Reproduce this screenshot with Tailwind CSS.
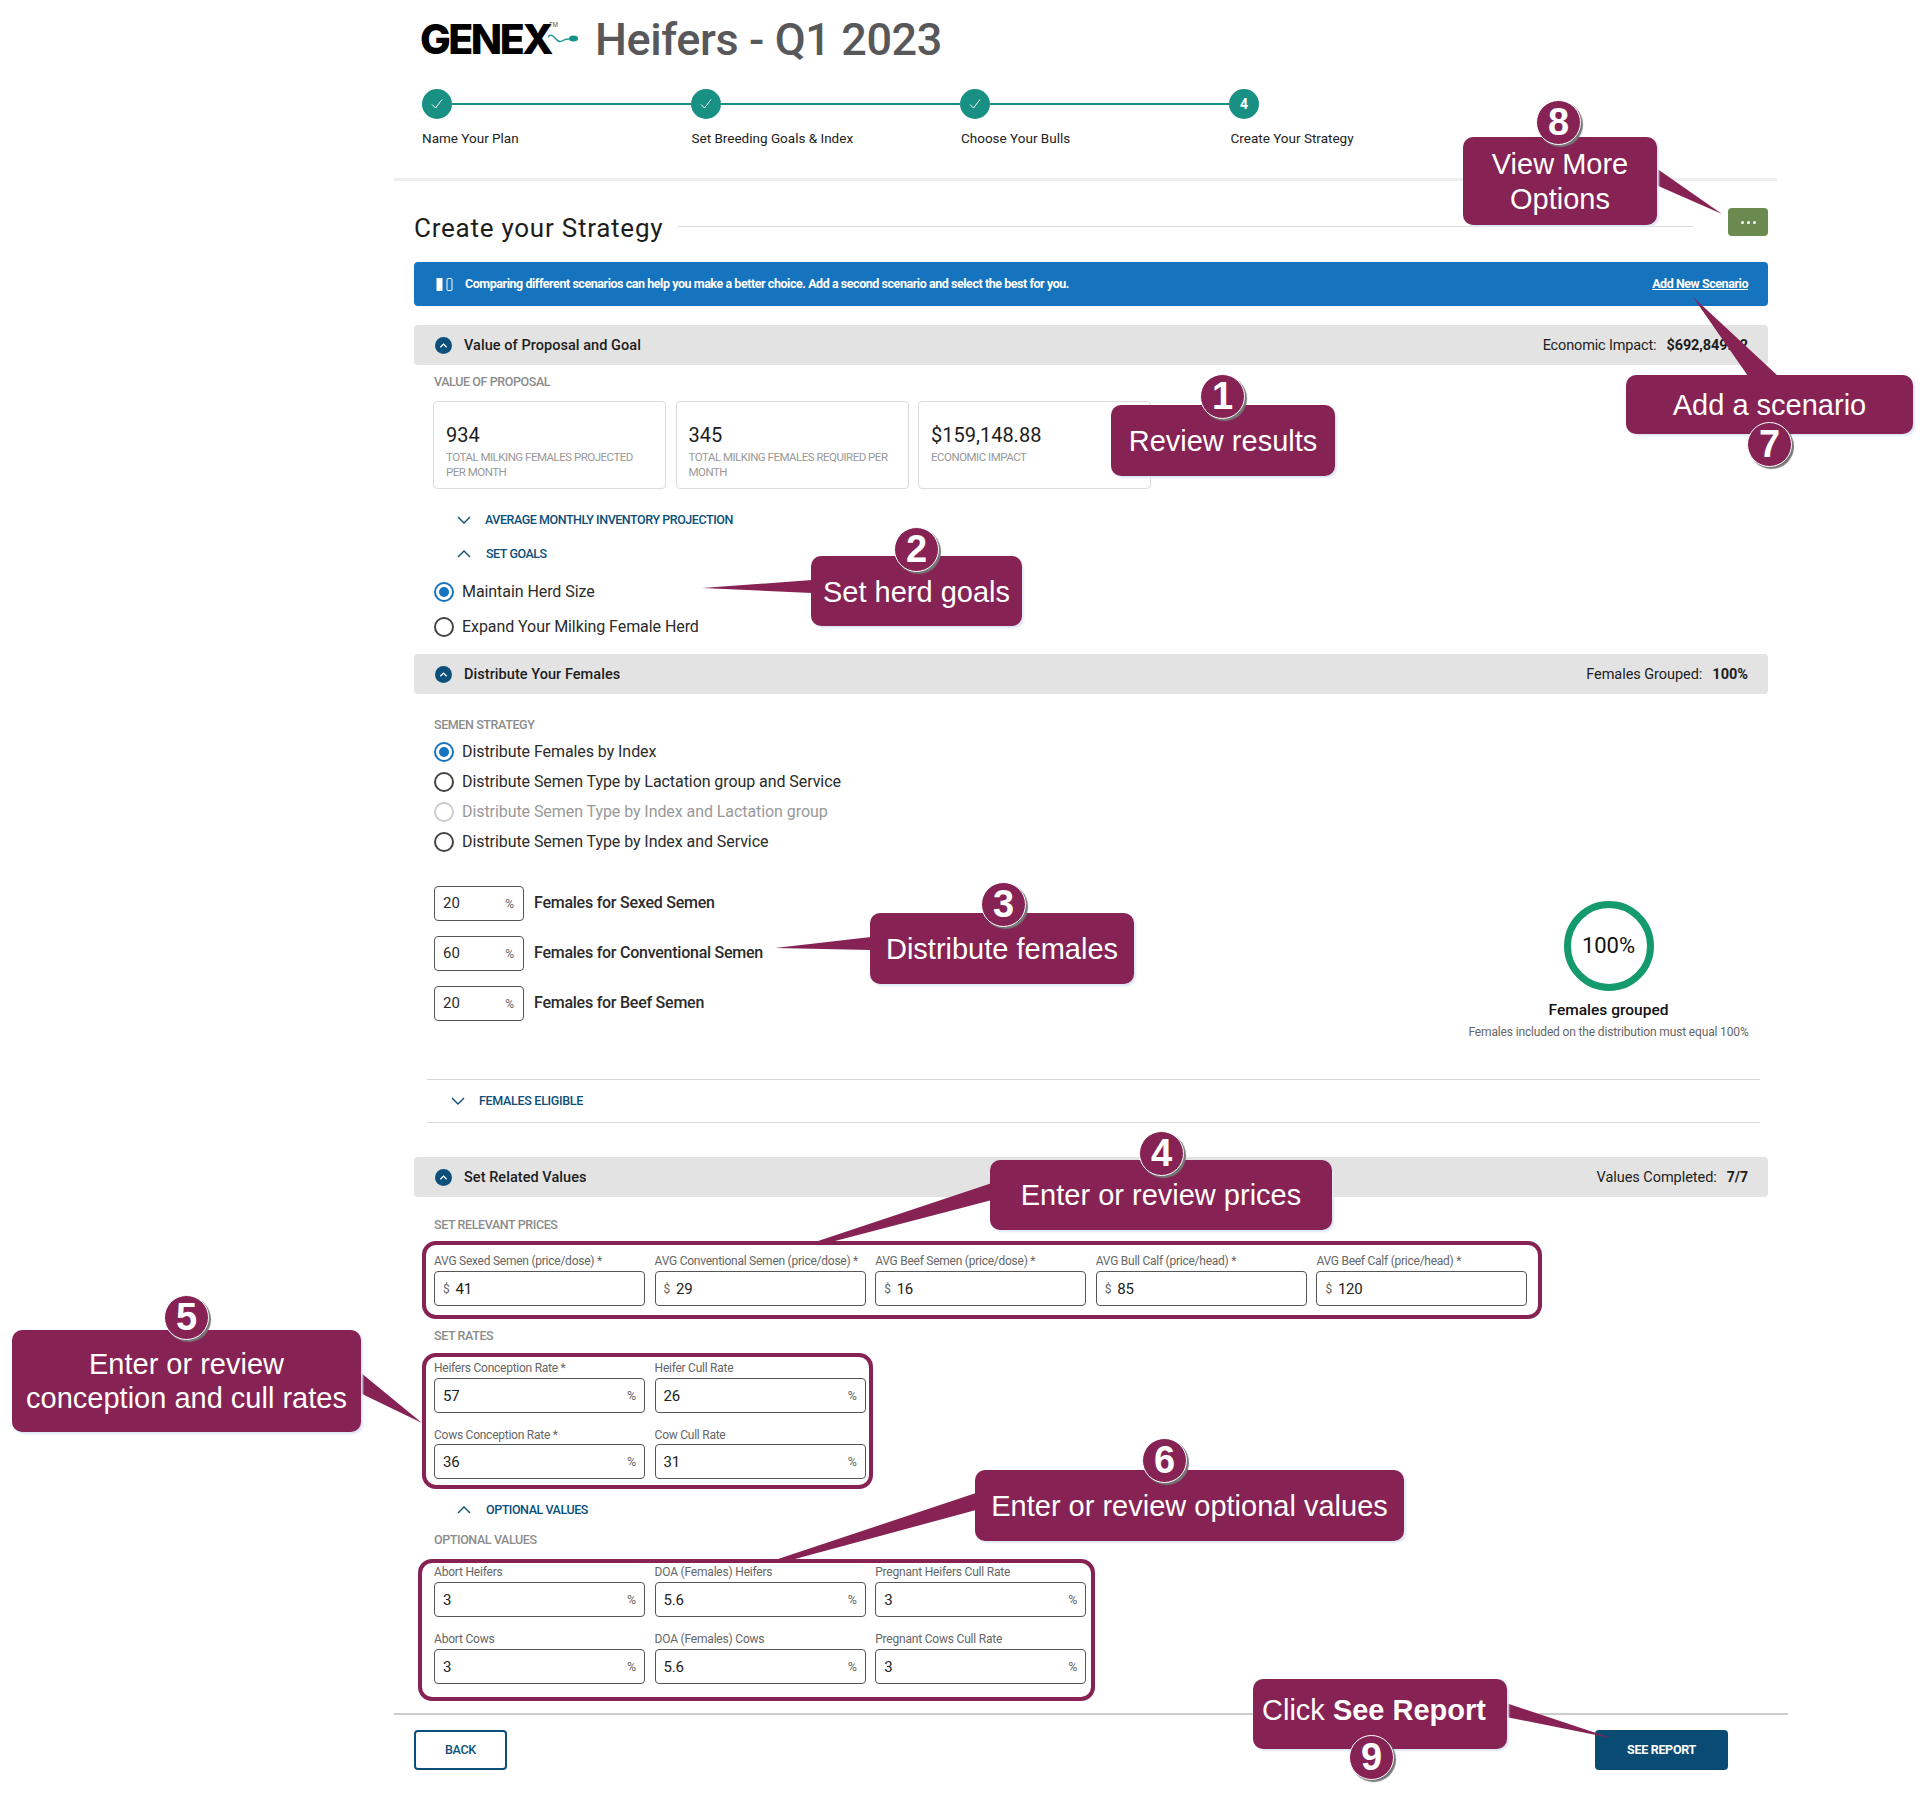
<!DOCTYPE html>
<html lang="en">
<head>
  <meta charset="UTF-8" />
  <title>Heifers - Q1 2023</title>
  <script src="https://cdn.jsdelivr.net/npm/@tailwindcss/browser@4"></script>
</head>
<body class="bg-white">
<div class="relative w-[1929px] h-[1794px] overflow-hidden bg-white font-['Roboto',sans-serif] text-[#2b2b2b]">

  <!-- Header -->
  <header class="ml-[394px] w-[1383px] h-[181px] pl-[28px] border-b-[3px] border-[#eeeeee]">
    <div class="flex items-center h-[78px]">
      <span class="relative -ml-[2px] font-['Inter',sans-serif] font-extrabold text-[41px] tracking-[-2.5px] text-black leading-none">GENEX<span class="absolute -right-[7px] top-[3px] text-[6px] font-normal tracking-normal text-[#555]">TM</span></span>
      <svg class="ml-[-3px] -mt-[1px] w-[30px] h-[14px]" viewBox="0 0 30 14" fill="none"><path d="M0 5 Q3 1 7 6 T14 9 T21 7" stroke="#2a9a97" stroke-width="1.5"/><ellipse cx="25.5" cy="6.5" rx="4.5" ry="3" fill="#13918c"/></svg>
      <h1 class="ml-[17px] text-[45px] font-medium tracking-[-0.4px] text-[#58585a] leading-none">Heifers - Q1 2023</h1>
    </div>
    <div class="flex items-center w-[837px] h-[30px] mt-[11px]">
      <span class="flex items-center justify-center w-[30px] h-[30px] rounded-full bg-[#189084] shrink-0"><svg class="w-[14px] h-[14px]" viewBox="0 0 14 14" fill="none" stroke="#fff" stroke-width="1"><path d="M2 7.5 5.5 11 12 2.5"/></svg></span>
      <span class="flex-1 h-[2px] bg-[#189084]"></span>
      <span class="flex items-center justify-center w-[30px] h-[30px] rounded-full bg-[#189084] shrink-0"><svg class="w-[14px] h-[14px]" viewBox="0 0 14 14" fill="none" stroke="#fff" stroke-width="1"><path d="M2 7.5 5.5 11 12 2.5"/></svg></span>
      <span class="flex-1 h-[2px] bg-[#189084]"></span>
      <span class="flex items-center justify-center w-[30px] h-[30px] rounded-full bg-[#189084] shrink-0"><svg class="w-[14px] h-[14px]" viewBox="0 0 14 14" fill="none" stroke="#fff" stroke-width="1"><path d="M2 7.5 5.5 11 12 2.5"/></svg></span>
      <span class="flex-1 h-[2px] bg-[#189084]"></span>
      <span class="flex items-center justify-center w-[30px] h-[30px] rounded-full bg-[#189084] shrink-0 text-white text-[14px] font-bold">4</span>
    </div>
    <div class="grid grid-cols-[repeat(4,269.5px)] mt-[10px] text-[13.5px] leading-[18px] tracking-[0px] text-[#222]">
      <span>Name Your Plan</span>
      <span>Set Breeding Goals &amp; Index</span>
      <span>Choose Your Bulls</span>
      <span>Create Your Strategy</span>
    </div>
  </header>

  <main class="ml-[414px] w-[1354px]">
    <!-- Title row -->
    <div class="flex items-center h-[28px] mt-[27px]">
      <h2 class="mt-[12px] text-[26px] leading-[30px] tracking-[0.75px] text-[#1d1d1d]">Create your Strategy</h2>
      <span class="flex-1 h-[1px] ml-[15px] mr-[35px] mt-[8px] bg-[#dddddd]"></span>
      <button class="flex items-center justify-center gap-[3px] w-[40px] h-[28px] rounded-[4px] bg-[#6a8a50]">
        <span class="w-[3px] h-[3px] rounded-full bg-white"></span><span class="w-[3px] h-[3px] rounded-full bg-white"></span><span class="w-[3px] h-[3px] rounded-full bg-white"></span>
      </button>
    </div>

    <!-- Scenario banner -->
    <div class="flex items-center justify-between h-[44px] mt-[26px] pl-[22px] pr-[20px] rounded-[4px] bg-[#1673bd] text-white text-[12.5px] font-bold tracking-[-0.45px]">
      <div class="flex items-center">
        <svg class="w-[17px] h-[15px]" viewBox="0 0 17 15"><rect x="0.5" y="1" width="6" height="13" fill="#fff"/><rect x="11" y="1.5" width="5" height="12" rx="1" fill="none" stroke="#fff"/></svg>
        <span class="ml-[12px]">Comparing different scenarios can help you make a better choice. Add a second scenario and select the best for you.</span>
      </div>
      <a class="underline" href="#">Add New Scenario</a>
    </div>

    <!-- Value of Proposal and Goal -->
    <div class="flex items-center justify-between h-[40px] mt-[19px] pt-[1px] pl-[21px] pr-[20px] rounded-[4px] bg-[#e3e3e3] text-[14.5px] text-[#1d1d1d]">
      <div class="flex items-center font-medium">
        <span class="flex items-center justify-center w-[17px] h-[17px] rounded-full bg-[#0b4f7a]"><svg class="w-[9px] h-[9px]" viewBox="0 0 10 10" fill="none" stroke="#fff" stroke-width="1.4"><path d="M1.5 7 5 3.5 8.5 7"/></svg></span>
        <span class="ml-[12px] tracking-[0.05px]">Value of Proposal and Goal</span>
      </div>
      <div class="flex items-center"><span class="tracking-[-0.15px]">Economic Impact:</span><span class="ml-[10px] font-bold text-[14.5px] tracking-[-0.1px]">$692,849.12</span></div>
    </div>
    <p class="h-[16px] mt-[9px] pl-[20px] text-[12.5px] leading-[16px] font-medium tracking-[-0.4px] text-[#8c8c8c]">VALUE OF PROPOSAL</p>
    <div class="grid grid-cols-[repeat(3,233px)] gap-x-[9.5px] mt-[11px] ml-[19px]">
      <div class="h-[88px] pt-[21px] pl-[12px] pr-[10px] border border-[#dddddd] rounded-[4px]">
        <p class="text-[20px] leading-[24px] text-[#1d1d1d]">934</p>
        <p class="mt-[3px] text-[11.5px] leading-[15px] tracking-[-0.5px] text-[#999]">TOTAL MILKING FEMALES PROJECTED<br>PER MONTH</p>
      </div>
      <div class="h-[88px] pt-[21px] pl-[12px] pr-[10px] border border-[#dddddd] rounded-[4px]">
        <p class="text-[20px] leading-[24px] text-[#1d1d1d]">345</p>
        <p class="mt-[3px] text-[11.5px] leading-[15px] tracking-[-0.5px] text-[#999]">TOTAL MILKING FEMALES REQUIRED PER<br>MONTH</p>
      </div>
      <div class="h-[88px] pt-[21px] pl-[12px] pr-[10px] border border-[#dddddd] rounded-[4px]">
        <p class="text-[20px] leading-[24px] text-[#1d1d1d]">$159,148.88</p>
        <p class="mt-[3px] text-[11.5px] leading-[15px] tracking-[-0.5px] text-[#999]">ECONOMIC IMPACT</p>
      </div>
    </div>
    <div class="flex items-center h-[20px] mt-[21px] pl-[43px] text-[12.5px] font-medium tracking-[-0.45px] text-[#0b4f7a]">
      <svg class="w-[14px] h-[14px]" viewBox="0 0 14 14" fill="none" stroke="#0b4f7a" stroke-width="1.4"><path d="M1 4 7 10 13 4"/></svg>
      <span class="ml-[14px]">AVERAGE MONTHLY INVENTORY PROJECTION</span>
    </div>
    <div class="flex items-center h-[20px] mt-[14px] pl-[43px] text-[12.5px] font-medium tracking-[-0.45px] text-[#0b4f7a]">
      <svg class="w-[14px] h-[14px]" viewBox="0 0 14 14" fill="none" stroke="#0b4f7a" stroke-width="1.4"><path d="M1 10 7 4 13 10"/></svg>
      <span class="ml-[15px]">SET GOALS</span>
    </div>
    <div class="flex items-center h-[20px] mt-[18px] pl-[20px] text-[16px] tracking-[-0.07px]">
      <span class="flex items-center justify-center w-[20px] h-[20px] rounded-full border-2 border-[#1673bd]"><span class="w-[10px] h-[10px] rounded-full bg-[#1673bd]"></span></span>
      <span class="ml-[8px]">Maintain Herd Size</span>
    </div>
    <div class="flex items-center h-[20px] mt-[15px] pl-[20px] text-[16px] tracking-[-0.07px]">
      <span class="w-[20px] h-[20px] rounded-full border-2 border-[#444]"></span>
      <span class="ml-[8px]">Expand Your Milking Female Herd</span>
    </div>

    <!-- Distribute Your Females -->
    <div class="flex items-center justify-between h-[40px] mt-[17px] pt-[1px] pl-[21px] pr-[20px] rounded-[4px] bg-[#e3e3e3] text-[14.5px] text-[#1d1d1d]">
      <div class="flex items-center font-medium">
        <span class="flex items-center justify-center w-[17px] h-[17px] rounded-full bg-[#0b4f7a]"><svg class="w-[9px] h-[9px]" viewBox="0 0 10 10" fill="none" stroke="#fff" stroke-width="1.4"><path d="M1.5 7 5 3.5 8.5 7"/></svg></span>
        <span class="ml-[12px] tracking-[0.05px]">Distribute Your Females</span>
      </div>
      <div class="flex items-center"><span class="tracking-[-0.05px]">Females Grouped:</span><span class="ml-[10px] font-bold text-[14.5px]">100%</span></div>
    </div>
    <p class="h-[16px] mt-[23px] pl-[20px] text-[12.5px] leading-[16px] font-medium tracking-[-0.4px] text-[#8c8c8c]">SEMEN STRATEGY</p>
    <div class="flex flex-col gap-[10px] mt-[9px] pl-[20px] text-[16px] tracking-[-0.07px]">
      <div class="flex items-center h-[20px]">
        <span class="flex items-center justify-center w-[20px] h-[20px] rounded-full border-2 border-[#1673bd]"><span class="w-[10px] h-[10px] rounded-full bg-[#1673bd]"></span></span>
        <span class="ml-[8px]">Distribute Females by Index</span>
      </div>
      <div class="flex items-center h-[20px]">
        <span class="w-[20px] h-[20px] rounded-full border-2 border-[#444]"></span>
        <span class="ml-[8px]">Distribute Semen Type by Lactation group and Service</span>
      </div>
      <div class="flex items-center h-[20px] text-[#999]">
        <span class="w-[20px] h-[20px] rounded-full border-2 border-[#ccc]"></span>
        <span class="ml-[8px]">Distribute Semen Type by Index and Lactation group</span>
      </div>
      <div class="flex items-center h-[20px]">
        <span class="w-[20px] h-[20px] rounded-full border-2 border-[#444]"></span>
        <span class="ml-[8px]">Distribute Semen Type by Index and Service</span>
      </div>
    </div>

    <div class="flex justify-between h-[193px] mt-[34px] pl-[20px] pr-[20px]">
      <div class="flex flex-col gap-[15px]">
        <div class="flex items-center">
          <div class="flex items-center justify-between w-[90px] h-[35px] pl-[8px] pr-[9px] border border-[#555] rounded-[4px] text-[15px]"><span>20</span><span class="text-[12px] text-[#666]">%</span></div>
          <span class="ml-[10px] -mt-[2px] text-[16px] font-medium tracking-[-0.25px]">Females for Sexed Semen</span>
        </div>
        <div class="flex items-center">
          <div class="flex items-center justify-between w-[90px] h-[35px] pl-[8px] pr-[9px] border border-[#555] rounded-[4px] text-[15px]"><span>60</span><span class="text-[12px] text-[#666]">%</span></div>
          <span class="ml-[10px] -mt-[2px] text-[16px] font-medium tracking-[-0.25px]">Females for Conventional Semen</span>
        </div>
        <div class="flex items-center">
          <div class="flex items-center justify-between w-[90px] h-[35px] pl-[8px] pr-[9px] border border-[#555] rounded-[4px] text-[15px]"><span>20</span><span class="text-[12px] text-[#666]">%</span></div>
          <span class="ml-[10px] -mt-[2px] text-[16px] font-medium tracking-[-0.25px]">Females for Beef Semen</span>
        </div>
      </div>
      <div class="flex flex-col items-center w-[279px] mt-[15px]">
        <div class="flex items-center justify-center w-[90px] h-[90px] rounded-full border-[7px] border-[#159a6e] text-[22px] text-[#111] pb-[2px]">100%</div>
        <p class="mt-[9px] text-[15.5px] leading-[20px] font-medium text-[#111]">Females grouped</p>
        <p class="mt-[3px] text-[12px] leading-[18px] tracking-[-0.15px] text-[#666] whitespace-nowrap">Females included on the distribution must equal 100%</p>
      </div>
    </div>

    <div class="flex items-center h-[44px] ml-[13px] w-[1333px] pl-[24px] border-y border-[#d8d8d8] text-[12.5px] font-medium tracking-[-0.3px] text-[#0b4f7a]">
      <svg class="w-[14px] h-[14px]" viewBox="0 0 14 14" fill="none" stroke="#0b4f7a" stroke-width="1.4"><path d="M1 4 7 10 13 4"/></svg>
      <span class="ml-[14px]">FEMALES ELIGIBLE</span>
    </div>

    <!-- Set Related Values -->
    <div class="flex items-center justify-between h-[40px] mt-[34px] pt-[1px] pl-[21px] pr-[20px] rounded-[4px] bg-[#e3e3e3] text-[14.5px] text-[#1d1d1d]">
      <div class="flex items-center font-medium">
        <span class="flex items-center justify-center w-[17px] h-[17px] rounded-full bg-[#0b4f7a]"><svg class="w-[9px] h-[9px]" viewBox="0 0 10 10" fill="none" stroke="#fff" stroke-width="1.4"><path d="M1.5 7 5 3.5 8.5 7"/></svg></span>
        <span class="ml-[12px] tracking-[0.05px]">Set Related Values</span>
      </div>
      <div class="flex items-center"><span class="tracking-[-0.05px]">Values Completed:</span><span class="ml-[10px] font-bold text-[14px]">7/7</span></div>
    </div>
    <p class="h-[16px] mt-[20px] pl-[20px] text-[12.5px] leading-[16px] font-medium tracking-[-0.4px] text-[#8c8c8c]">SET RELEVANT PRICES</p>

    <div class="grid grid-cols-[repeat(5,211px)] gap-x-[9.6px] mt-[20px] pl-[20px] text-[12px] leading-[16px] tracking-[-0.25px] text-[#666]">
      <div><p class="mb-[2px] whitespace-nowrap">AVG Sexed Semen (price/dose) *</p><div class="flex items-center h-[35px] px-[8px] border border-[#555] rounded-[4px] text-[15px] text-[#222]"><span class="text-[12px] text-[#666] mr-[6px]">$</span>41</div></div>
      <div><p class="mb-[2px] whitespace-nowrap">AVG Conventional Semen (price/dose) *</p><div class="flex items-center h-[35px] px-[8px] border border-[#555] rounded-[4px] text-[15px] text-[#222]"><span class="text-[12px] text-[#666] mr-[6px]">$</span>29</div></div>
      <div><p class="mb-[2px] whitespace-nowrap">AVG Beef Semen (price/dose) *</p><div class="flex items-center h-[35px] px-[8px] border border-[#555] rounded-[4px] text-[15px] text-[#222]"><span class="text-[12px] text-[#666] mr-[6px]">$</span>16</div></div>
      <div><p class="mb-[2px] whitespace-nowrap">AVG Bull Calf (price/head) *</p><div class="flex items-center h-[35px] px-[8px] border border-[#555] rounded-[4px] text-[15px] text-[#222]"><span class="text-[12px] text-[#666] mr-[6px]">$</span>85</div></div>
      <div><p class="mb-[2px] whitespace-nowrap">AVG Beef Calf (price/head) *</p><div class="flex items-center h-[35px] px-[8px] border border-[#555] rounded-[4px] text-[15px] text-[#222]"><span class="text-[12px] text-[#666] mr-[6px]">$</span>120</div></div>
    </div>

    <p class="h-[16px] mt-[22px] pl-[20px] text-[12.5px] leading-[16px] font-medium tracking-[-0.4px] text-[#8c8c8c]">SET RATES</p>
    <div class="grid grid-cols-[repeat(2,211px)] gap-x-[9.6px] gap-y-[14px] mt-[16px] pl-[20px] text-[12px] leading-[16px] tracking-[-0.25px] text-[#666]">
      <div><p class="mb-[2px]">Heifers Conception Rate *</p><div class="flex items-center justify-between h-[35px] px-[8px] border border-[#555] rounded-[4px] text-[15px] text-[#222]">57<span class="text-[12.5px] text-[#666]">%</span></div></div>
      <div><p class="mb-[2px]">Heifer Cull Rate</p><div class="flex items-center justify-between h-[35px] px-[8px] border border-[#555] rounded-[4px] text-[15px] text-[#222]">26<span class="text-[12.5px] text-[#666]">%</span></div></div>
      <div><p class="mb-[1px]">Cows Conception Rate *</p><div class="flex items-center justify-between h-[35px] px-[8px] border border-[#555] rounded-[4px] text-[15px] text-[#222]">36<span class="text-[12.5px] text-[#666]">%</span></div></div>
      <div><p class="mb-[1px]">Cow Cull Rate</p><div class="flex items-center justify-between h-[35px] px-[8px] border border-[#555] rounded-[4px] text-[15px] text-[#222]">31<span class="text-[12.5px] text-[#666]">%</span></div></div>
    </div>

    <div class="flex items-center h-[20px] mt-[21px] pl-[43px] text-[12.5px] font-medium tracking-[-0.45px] text-[#0b4f7a]">
      <svg class="w-[14px] h-[14px]" viewBox="0 0 14 14" fill="none" stroke="#0b4f7a" stroke-width="1.4"><path d="M1 10 7 4 13 10"/></svg>
      <span class="ml-[15px]">OPTIONAL VALUES</span>
    </div>
    <p class="h-[16px] mt-[12px] pl-[20px] text-[12.5px] leading-[16px] font-medium tracking-[-0.4px] text-[#8c8c8c]">OPTIONAL VALUES</p>
    <div class="grid grid-cols-[repeat(3,211px)] gap-x-[9.6px] gap-y-[14px] mt-[16px] pl-[20px] text-[12px] leading-[16px] tracking-[-0.2px] text-[#666]">
      <div><p class="mb-[2px]">Abort Heifers</p><div class="flex items-center justify-between h-[35px] px-[8px] border border-[#555] rounded-[4px] text-[15px] text-[#222]">3<span class="text-[12.5px] text-[#666]">%</span></div></div>
      <div><p class="mb-[2px]">DOA (Females) Heifers</p><div class="flex items-center justify-between h-[35px] px-[8px] border border-[#555] rounded-[4px] text-[15px] text-[#222]">5.6<span class="text-[12.5px] text-[#666]">%</span></div></div>
      <div><p class="mb-[2px]">Pregnant Heifers Cull Rate</p><div class="flex items-center justify-between h-[35px] px-[8px] border border-[#555] rounded-[4px] text-[15px] text-[#222]">3<span class="text-[12.5px] text-[#666]">%</span></div></div>
      <div><p class="mb-[2px]">Abort Cows</p><div class="flex items-center justify-between h-[35px] px-[8px] border border-[#555] rounded-[4px] text-[15px] text-[#222]">3<span class="text-[12.5px] text-[#666]">%</span></div></div>
      <div><p class="mb-[2px]">DOA (Females) Cows</p><div class="flex items-center justify-between h-[35px] px-[8px] border border-[#555] rounded-[4px] text-[15px] text-[#222]">5.6<span class="text-[12.5px] text-[#666]">%</span></div></div>
      <div><p class="mb-[2px]">Pregnant Cows Cull Rate</p><div class="flex items-center justify-between h-[35px] px-[8px] border border-[#555] rounded-[4px] text-[15px] text-[#222]">3<span class="text-[12.5px] text-[#666]">%</span></div></div>
    </div>

    <!-- Footer -->
    <div class="-ml-[20px] w-[1394px] mt-[29px] h-[2px] bg-[#cccccc]"></div>
    <div class="flex justify-between mt-[15px] pr-[40px] text-[12.5px] font-medium tracking-[-0.3px]">
      <button class="w-[93px] h-[40px] border-2 border-[#0b4f7a] rounded-[4px] text-[#0b4f7a]">BACK</button>
      <button class="w-[133px] h-[40px] rounded-[4px] bg-[#0a4b73] text-white font-bold">SEE REPORT</button>
    </div>
  </main>

  <!-- Annotation layer: outlines and callout pointers sit over the page -->
  <div class="absolute left-[422px] top-[1241px] w-[1120px] h-[78px] border-4 border-[#862354] rounded-[14px]"></div>
  <div class="absolute left-[422px] top-[1353px] w-[451px] h-[136px] border-4 border-[#862354] rounded-[14px]"></div>
  <div class="absolute left-[418px] top-[1559px] w-[677px] h-[142px] border-4 border-[#862354] rounded-[14px]"></div>
  <svg class="absolute left-0 top-0 w-[1929px] h-[1794px]" viewBox="0 0 1929 1794" fill="#862354">
    <polygon points="812,580 812,593 702,588"/>
    <polygon points="871,937 871,950 775,948"/>
    <polygon points="992,1183 992,1200 835,1241 818,1241"/>
    <polygon points="360,1372 360,1393 422,1423"/>
    <polygon points="976,1493 976,1510 795,1559 778,1559"/>
    <polygon points="1748,376 1778,376 1693,297"/>
    <polygon points="1656,168 1656,185 1722,214"/>
    <polygon points="1506,1703 1506,1717 1611,1738"/>
  </svg>

  <div class="absolute left-[1111px] top-[405px] w-[224px] h-[71px] flex items-center justify-center pt-[2px] rounded-[10px] bg-[#862354] shadow-[2px_2px_2px_#dfe6f5] font-['Liberation_Sans',sans-serif] text-[29px] text-white">Review results</div>
  <div class="absolute left-[811px] top-[556px] w-[211px] h-[70px] flex items-center justify-center pt-[3px] rounded-[10px] bg-[#862354] shadow-[2px_2px_2px_#dfe6f5] font-['Liberation_Sans',sans-serif] text-[29px] text-white">Set herd goals</div>
  <div class="absolute left-[870px] top-[913px] w-[264px] h-[71px] flex items-center justify-center pt-[2px] rounded-[10px] bg-[#862354] shadow-[2px_2px_2px_#dfe6f5] font-['Liberation_Sans',sans-serif] text-[29px] text-white">Distribute females</div>
  <div class="absolute left-[990px] top-[1160px] w-[342px] h-[70px] flex items-center justify-center pt-[2px] rounded-[10px] bg-[#862354] shadow-[2px_2px_2px_#dfe6f5] font-['Liberation_Sans',sans-serif] text-[29px] text-white">Enter or review prices</div>
  <div class="absolute left-[12px] top-[1330px] w-[349px] h-[102px] flex items-center justify-center text-center rounded-[10px] bg-[#862354] shadow-[2px_2px_2px_#dfe6f5] font-['Liberation_Sans',sans-serif] text-[29px] leading-[34px] text-white">Enter or review<br>conception and cull rates</div>
  <div class="absolute left-[975px] top-[1470px] w-[429px] h-[71px] flex items-center justify-center pt-[2px] rounded-[10px] bg-[#862354] shadow-[2px_2px_2px_#dfe6f5] font-['Liberation_Sans',sans-serif] text-[29px] text-white">Enter or review optional values</div>
  <div class="absolute left-[1626px] top-[375px] w-[287px] h-[59px] flex items-center justify-center pt-[2px] rounded-[10px] bg-[#862354] shadow-[2px_2px_2px_#dfe6f5] font-['Liberation_Sans',sans-serif] text-[29px] text-white">Add a scenario</div>
  <div class="absolute left-[1463px] top-[137px] w-[194px] h-[88px] flex items-center justify-center text-center pt-[2px] rounded-[10px] bg-[#862354] shadow-[2px_2px_2px_#dfe6f5] font-['Liberation_Sans',sans-serif] text-[29px] leading-[35px] text-white">View More<br>Options</div>
  <div class="absolute left-[1253px] top-[1679px] w-[254px] h-[70px] flex items-center justify-center pb-[6px] pr-[12px] rounded-[10px] bg-[#862354] shadow-[2px_2px_2px_#dfe6f5] font-['Liberation_Sans',sans-serif] text-[29px] text-white"><span>Click <b>See Report</b></span></div>

  <span class="absolute left-[1200px] top-[374px] w-[45px] h-[45px] flex items-center justify-center rounded-full border border-white bg-[#862354] shadow-[2px_2px_1px_#777] font-['Liberation_Sans',sans-serif] font-bold text-[38px] text-white">1</span>
  <span class="absolute left-[894px] top-[527px] w-[45px] h-[45px] flex items-center justify-center rounded-full border border-white bg-[#862354] shadow-[2px_2px_1px_#777] font-['Liberation_Sans',sans-serif] font-bold text-[38px] text-white">2</span>
  <span class="absolute left-[981px] top-[882px] w-[45px] h-[45px] flex items-center justify-center rounded-full border border-white bg-[#862354] shadow-[2px_2px_1px_#777] font-['Liberation_Sans',sans-serif] font-bold text-[38px] text-white">3</span>
  <span class="absolute left-[1139px] top-[1131px] w-[45px] h-[45px] flex items-center justify-center rounded-full border border-white bg-[#862354] shadow-[2px_2px_1px_#777] font-['Liberation_Sans',sans-serif] font-bold text-[38px] text-white">4</span>
  <span class="absolute left-[164px] top-[1295px] w-[45px] h-[45px] flex items-center justify-center rounded-full border border-white bg-[#862354] shadow-[2px_2px_1px_#777] font-['Liberation_Sans',sans-serif] font-bold text-[38px] text-white">5</span>
  <span class="absolute left-[1142px] top-[1438px] w-[45px] h-[45px] flex items-center justify-center rounded-full border border-white bg-[#862354] shadow-[2px_2px_1px_#777] font-['Liberation_Sans',sans-serif] font-bold text-[38px] text-white">6</span>
  <span class="absolute left-[1747px] top-[422px] w-[45px] h-[45px] flex items-center justify-center rounded-full border border-white bg-[#862354] shadow-[2px_2px_1px_#777] font-['Liberation_Sans',sans-serif] font-bold text-[38px] text-white">7</span>
  <span class="absolute left-[1536px] top-[100px] w-[45px] h-[45px] flex items-center justify-center rounded-full border border-white bg-[#862354] shadow-[2px_2px_1px_#777] font-['Liberation_Sans',sans-serif] font-bold text-[38px] text-white">8</span>
  <span class="absolute left-[1349px] top-[1735px] w-[45px] h-[45px] flex items-center justify-center rounded-full border border-white bg-[#862354] shadow-[2px_2px_1px_#777] font-['Liberation_Sans',sans-serif] font-bold text-[38px] text-white">9</span>
</div>
</body>
</html>
